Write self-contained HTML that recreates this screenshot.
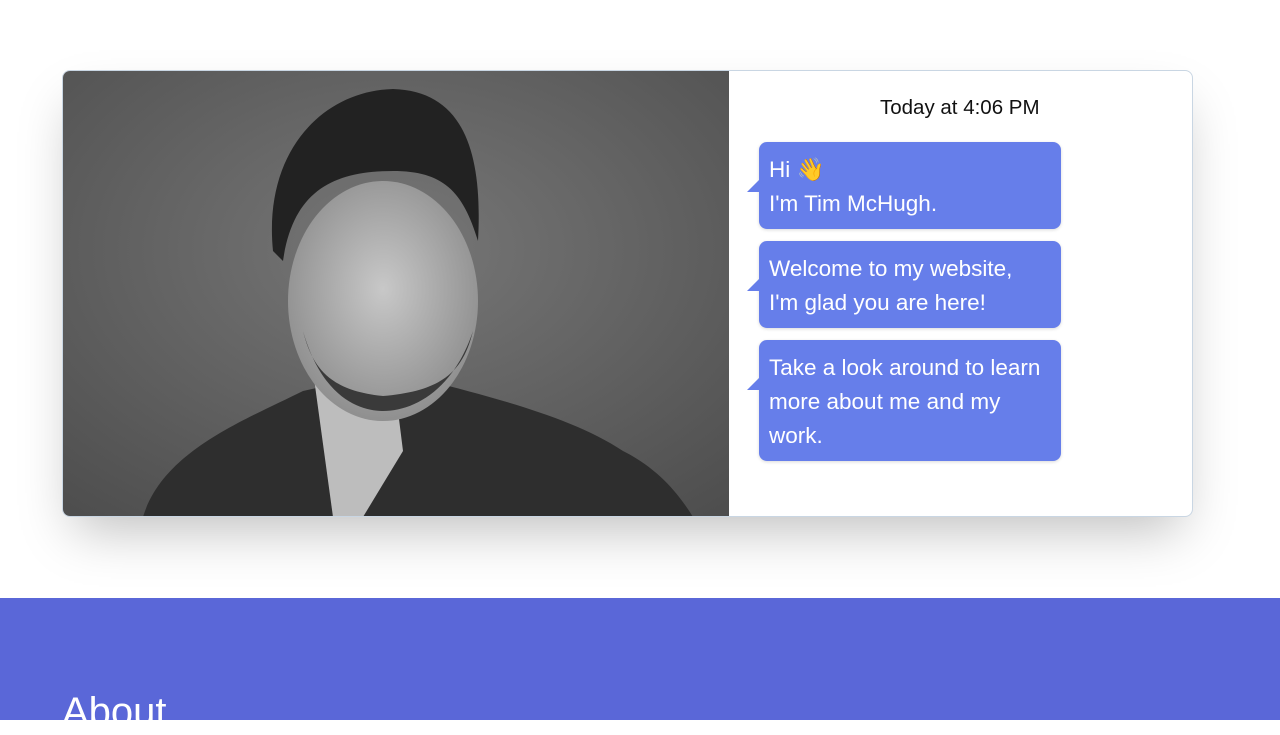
<!DOCTYPE html>
<html><head><meta charset="utf-8"><style>
body{margin:0;width:1280px;height:720px;overflow:hidden;background:#fff;font-family:"Liberation Sans",sans-serif;}
.card{position:absolute;left:62px;top:70px;width:1129px;height:445px;border:1px solid #c9d6e3;border-radius:8px;background:#fff;overflow:hidden;box-shadow:0 25px 50px -12px rgba(0,0,0,.25);}
.photo{position:absolute;left:0;top:0;width:666px;height:446px;}
.time{position:absolute;left:880px;top:96px;font-size:20.5px;color:#111;}
.b{position:absolute;left:759px;width:282px;height:auto;background:#667eea;color:#fff;font-size:22.5px;line-height:34px;padding:11px 10px 8px;border-radius:8px;box-shadow:0 1px 3px rgba(0,0,0,.15);}
.b:before{content:"";position:absolute;left:-12px;top:38px;border-right:12px solid #667eea;border-top:12px solid transparent;}
.foot{position:absolute;left:0;top:598px;width:1280px;height:122px;background:#5a67d8;}
.foot h2{position:absolute;left:62px;top:92px;margin:0;font-size:40px;font-weight:300;color:#fff;}
</style></head><body>
<div class="card">
<svg class="photo" viewBox="0 0 666 446" width="666" height="446">
<defs><radialGradient id="bg" cx="0.5" cy="0.4" r="0.8"><stop offset="0" stop-color="#777"/><stop offset="1" stop-color="#4c4c4c"/></radialGradient>
<radialGradient id="fc" cx="0.5" cy="0.45" r="0.6"><stop offset="0" stop-color="#c8c8c8"/><stop offset="1" stop-color="#8a8a8a"/></radialGradient></defs>
<rect width="666" height="446" fill="url(#bg)"/>
<path d="M80 446 C100 380 180 350 240 320 L330 300 C400 320 500 340 560 380 C600 400 620 430 630 446Z" fill="#2e2e2e"/>
<path d="M250 300 L330 300 L340 380 L300 446 L270 446Z" fill="#bdbdbd"/>
<ellipse cx="320" cy="230" rx="95" ry="120" fill="url(#fc)"/>
<path d="M210 180 C200 80 260 20 330 18 C400 20 420 80 415 170 C400 120 380 100 330 100 C270 100 230 120 220 190Z" fill="#222"/>
<path d="M240 260 C260 330 300 340 320 340 C350 340 390 320 410 260 C400 300 380 320 320 325 C270 320 250 300 240 260Z" fill="#3a3a3a"/>
</svg>
</div>
<div class="time">Today at 4:06 PM</div>
<div class="b" style="top:142px">Hi 👋<br>I'm Tim McHugh.</div>
<div class="b" style="top:241px">Welcome to my website,<br>I'm glad you are here!</div>
<div class="b" style="top:340px">Take a look around to learn more about me and my work.</div>
<div class="foot"><h2>About</h2></div>
</body></html>
